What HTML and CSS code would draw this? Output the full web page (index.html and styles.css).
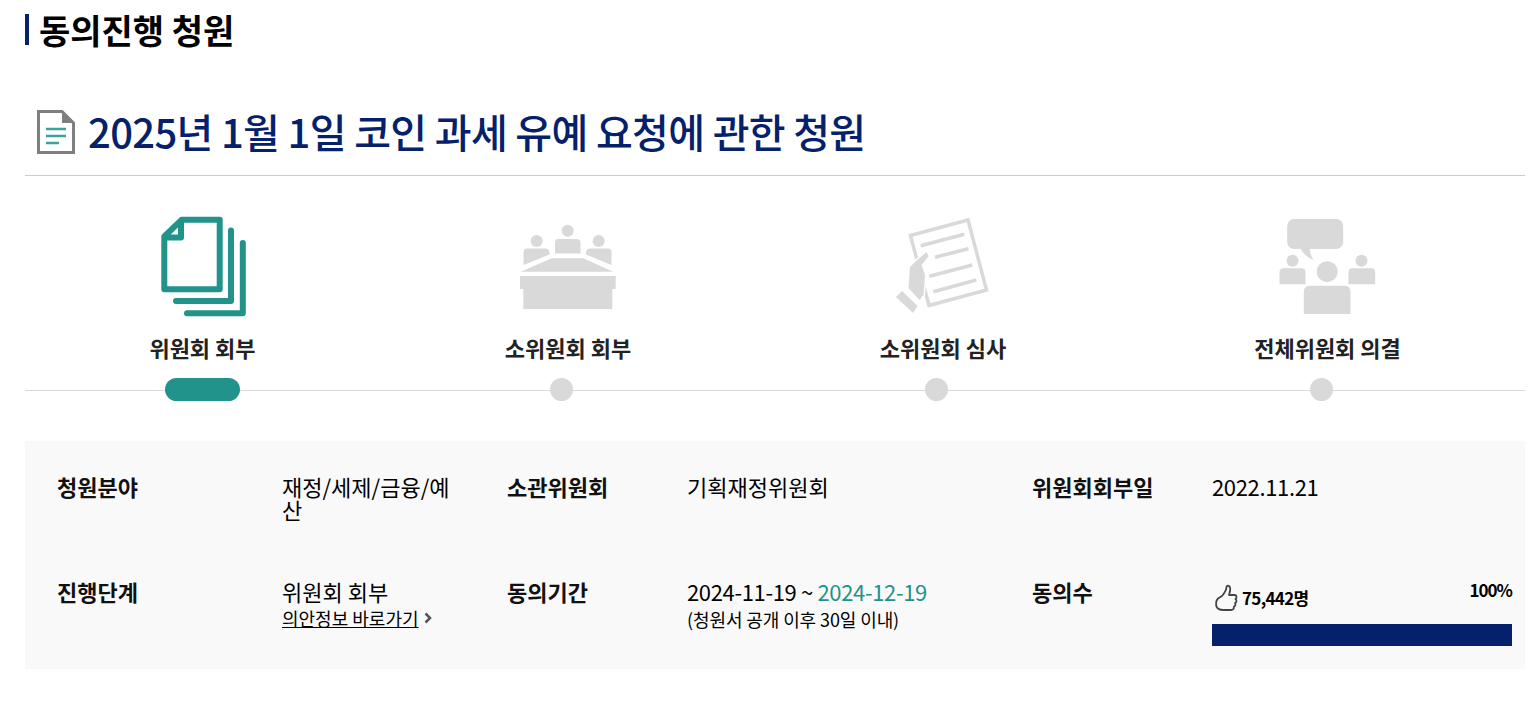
FILE: index.html
```html
<!DOCTYPE html>
<html lang="en">
<head>
    <meta charset="UTF-8">
    <meta name="viewport" content="width=device-width, initial-scale=1.0">
    <title>동의진행 청원</title>
    <link rel="stylesheet" href="styles.css">
</head>
<body>

<h2 class="section-title">동의진행 청원</h2>

<div class="petition-title">
    <svg class="doc-icon" width="38" height="44" viewBox="0 0 38 44">
        <path d="M1.5 1.5 H25 L36.5 13 V42.5 H1.5 Z" fill="#fff" stroke="#7f7f7f" stroke-width="3"/>
        <path d="M25 0 L38 13 H25 Z" fill="#7f7f7f"/>
        <path d="M9 19 H29 M9 26 H29 M9 33 H22" fill="none" stroke="#3aa39b" stroke-width="2.5"/>
    </svg>
    <h3>2025년 1월 1일 코인 과세 유예 요청에 관한 청원</h3>
</div>

<ul class="steps">
    <li class="step active">
        <svg class="step-icon" width="100" height="110" viewBox="152.5 212 100 110">
            <path d="M163.8 236.5 L181 219.8 H219.2 V289.2 H163.8 Z M163.8 237.5 H180.5 V219.8" fill="none" stroke="#22938b" stroke-width="6" stroke-linejoin="round"/>
            <path d="M230.5 230.5 V301 H175.5 M242.3 243 V313.3 H186.5" fill="none" stroke="#22938b" stroke-width="6" stroke-linecap="round" stroke-linejoin="round"/>
        </svg>
        <span class="step-name">위원회 회부</span>
        <span class="step-dot"></span>
    </li>
    <li class="step">
        <svg class="step-icon" width="100" height="110" viewBox="518 212 100 110">
            <g fill="#d9d9d9">
                <circle cx="567.7" cy="230.7" r="6"/>
                <circle cx="536.7" cy="241" r="6"/>
                <circle cx="598.7" cy="241" r="6"/>
                <path d="M558 239 H577 Q580.5 239 580.5 242.5 V253.5 H555 V242.5 Q555 239 558 239 Z"/>
                <path d="M523.5 265 V252 Q523.5 248.5 527 248.5 H545 Q549.5 248.5 549.5 253 V254.5 Z"/>
                <path d="M611.5 265 V252 Q611.5 248.5 608 248.5 H590 Q586 248.5 586 253 V254.5 Z"/>
                <path d="M551.7 258.3 H583.3 L613.3 271.7 H520.7 Z"/>
                <path d="M520 276 H615.7 V289 H612.3 V309 H523.3 V289 H520 Z"/>
            </g>
        </svg>
        <span class="step-name">소위원회 회부</span>
        <span class="step-dot"></span>
    </li>
    <li class="step">
        <svg class="step-icon" width="100" height="110" viewBox="893 212 100 110">
            <path d="M910.5 235.5 L968 220 L986.5 290 L929 305.5 Z" fill="#fff" stroke="#d9d9d9" stroke-width="3.5"/>
            <path d="M920.7 245.7 L964.3 234.3 M935 257.3 L968.3 248.7 M929.3 276.3 L972.3 265 M933.3 291.7 L976.3 280" fill="none" stroke="#d9d9d9" stroke-width="3.5"/>
            <g fill="#d9d9d9">
                <path d="M926.7 252 L928.5 256.5 L921.5 265 L925 275 L923.5 295 L919.5 300 L908.5 288 L910 267 L917 260 Z" stroke="#fff" stroke-width="3" paint-order="stroke"/>
                <path d="M902 291 L917.5 306 L913 313 L896 297 Z"/>
            </g>
        </svg>
        <span class="step-name">소위원회 심사</span>
        <span class="step-dot"></span>
    </li>
    <li class="step">
        <svg class="step-icon" width="100" height="110" viewBox="1277.5 212 100 110">
            <g fill="#d9d9d9">
                <rect x="1286.7" y="219" width="56" height="30" rx="7"/>
                <path d="M1299 247 Q1304 257 1313.5 260 Q1309 255 1309 247 Z"/>
                <circle cx="1292" cy="260.7" r="6"/>
                <circle cx="1361" cy="260.7" r="6"/>
                <circle cx="1326.7" cy="271.7" r="10.5"/>
                <path d="M1283 268.3 H1301 Q1305 268.3 1305 272.3 V284.3 H1279 V272.3 Q1279 268.3 1283 268.3 Z"/>
                <path d="M1352 268.3 H1370.7 Q1374.7 268.3 1374.7 272.3 V284.3 H1348 V272.3 Q1348 268.3 1352 268.3 Z"/>
                <path d="M1310 285.7 H1343.5 Q1350 285.7 1350 292 V314 H1303.3 V292 Q1303.3 285.7 1310 285.7 Z"/>
            </g>
        </svg>
        <span class="step-name">전체위원회 의결</span>
        <span class="step-dot"></span>
    </li>
</ul>

<div class="info">
    <div class="info-label">청원분야</div>
    <div class="info-value"><span class="field-wrap">재정/세제/금융/예산</span></div>
    <div class="info-label">소관위원회</div>
    <div class="info-value">기획재정위원회</div>
    <div class="info-label">위원회회부일</div>
    <div class="info-value num">2022.11.21</div>

    <div class="info-label">진행단계</div>
    <div class="info-value">
        위원회 회부
        <a class="bill-link" href="#"><span>의안정보 바로가기</span>
            <svg width="8" height="12" viewBox="0 0 8 12"><path d="M1.5 1.5 L6 6 L1.5 10.5" fill="none" stroke="#555" stroke-width="2.5"/></svg>
        </a>
    </div>
    <div class="info-label">동의기간</div>
    <div class="info-value">
        <span class="num">2024-11-19 ~ <span class="end-date">2024-12-19</span></span>
        <small class="period-note">(청원서 공개 이후 30일 이내)</small>
    </div>
    <div class="info-label">동의수</div>
    <div class="info-value">
        <div class="agree-top">
            <span class="agree-count">
                <svg width="24" height="28" viewBox="0 0 24 28">
                    <path d="M8 12 C10.5 9 12.5 6 12.5 3 C12.5 1.3 15.8 1 16.2 4 C16.5 6.5 15.5 9 15 11 H20.5 C23 11 23 14 21.5 15 C23 16 22.8 18.5 21 19 C22 20.5 21.3 22.3 19.8 22.8 C20.3 24.8 19 26 17 26 H9 C6 26 4 25 3 23.5 C1.5 21 1.8 16.5 4 14.5 Z" fill="none" stroke="#444" stroke-width="1.8" stroke-linejoin="round"/>
                </svg>
                75,442명
            </span>
            <span class="agree-rate">100%</span>
        </div>
        <div class="bar"><div class="bar-fill" style="width: 100%"></div></div>
    </div>
</div>

</body>
</html>
```

FILE: styles.css
```css
/* Global Styles */
body {
    font-family: 'Noto Sans CJK KR', 'Noto Sans', sans-serif;
    margin: 0;
    padding: 14px 8px 0 25px;
    background: #fff;
    color: #000;
}

.section-title {
    margin: 0;
    padding-left: 10px;
    height: 31px;
    line-height: 32px;
    border-left: 4px solid #06216b;
    font-size: 34px;
    font-weight: 700;
}

.petition-title {
    display: flex;
    align-items: center;
    gap: 13px;
    margin-top: 60px;
    padding: 0 0 17px 12px;
    border-bottom: 1px solid #ccc;
    height: 53px;
}

.doc-icon {
    flex: none;
}

.petition-title h3 {
    margin: 0;
    font-size: 40px;
    font-weight: 500;
    line-height: 53px;
    letter-spacing: -0.67px;
    color: #06216b;
}

/* Steps */
.steps {
    display: grid;
    grid-template-columns: 355px 376px 374px 395px;
    margin: 0;
    padding: 36px 0 0;
    list-style: none;
    background: linear-gradient(#d9d9d9, #d9d9d9) no-repeat 0 calc(100% - 10px) / 100% 1px;
}

.step {
    display: flex;
    flex-direction: column;
    align-items: center;
}

.step-icon {
    display: block;
}

.step-name {
    margin-top: 10px;
    font-size: 22px;
    font-weight: 700;
    line-height: 30px;
    color: #222;
}

.step-dot {
    width: 23px;
    height: 23px;
    margin-top: 16px;
    margin-right: 13px;
    border-radius: 12px;
    background: #d9d9d9;
}

.step.active .step-dot {
    width: 75px;
    margin-right: 0;
    background: #22938b;
}

/* Info panel */
.info {
    display: grid;
    grid-template-columns: 225px 225px 180px 345px 180px 300px;
    grid-template-rows: 105px 123px;
    margin-top: 40px;
    padding: 0 13px 0 32px;
    background: #f9f9f9;
}

.info-label,
.info-value {
    padding-top: 34px;
    font-size: 22px;
    line-height: 23px;
}

.info-label {
    font-weight: 700;
    color: #111;
}

.num {
    letter-spacing: -0.35px;
}

.field-wrap {
    display: block;
    width: 170px;
    word-break: break-all;
}

.bill-link {
    display: flex;
    align-items: center;
    gap: 5px;
    margin-top: 4px;
    font-size: 18px;
    line-height: 22px;
    color: #000;
    text-decoration: none;
}

.bill-link span {
    text-decoration: underline;
    text-underline-offset: 1px;
}

.end-date {
    color: #22938b;
}

.period-note {
    display: block;
    margin-top: 4px;
    font-size: 18px;
    line-height: 24px;
    letter-spacing: -0.1px;
}

.agree-top {
    display: flex;
    justify-content: space-between;
    align-items: flex-start;
}

.agree-count {
    display: flex;
    align-items: center;
    gap: 4px;
    margin-top: 4px;
    padding-left: 2px;
    font-size: 17px;
    font-weight: 700;
    line-height: 28px;
    letter-spacing: -0.7px;
}

.agree-rate {
    font-size: 17px;
    font-weight: 700;
    line-height: 20px;
    letter-spacing: -1px;
}

.bar {
    height: 22px;
    margin-top: 12px;
    background: #e5e5e5;
}

.bar-fill {
    height: 100%;
    background: #06216b;
}
```
